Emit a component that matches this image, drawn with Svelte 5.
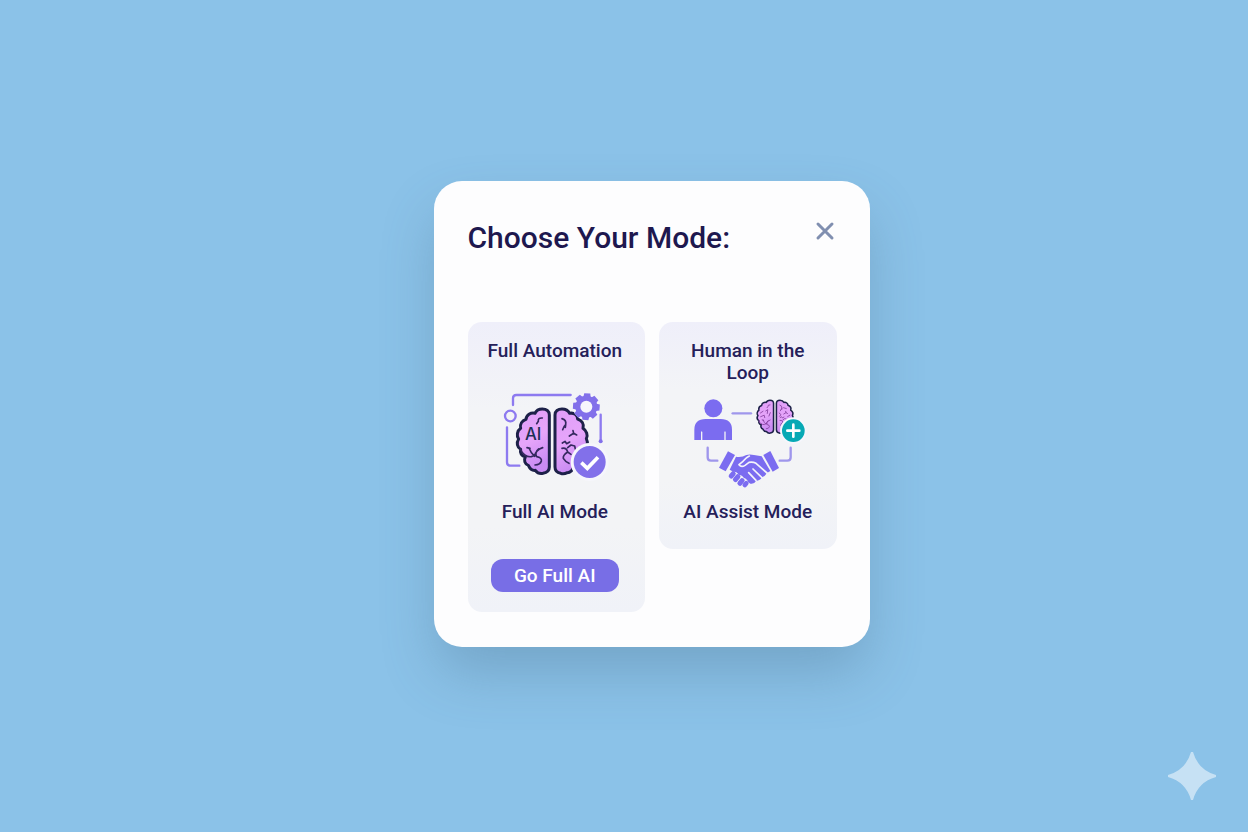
<script module lang="ts">
	export interface ModePickerProps {
		onSelect?: (mode: string) => void;
		onClose?: () => void;
	}
</script>

<script lang="ts">
	let { onSelect, onClose }: ModePickerProps = $props();

	// one tooth, repeated around the gear
	const teeth = [0, 45, 90, 135, 180, 225, 270, 315];
</script>

{#snippet brainHalves()}
	<path
		class="lobe"
		d="M164 90 C164 78 155 72 143 72 C131 72 124 78 121 85 C108 82 95 90 94 103 C82 107 75 117 78 130 C67 138 65 152 72 162 C65 173 67 186 78 193 C75 204 81 214 92 216 C87 225 90 238 101 241 C106 252 114 257 122 256 C128 264 137 267 145 265 C157 263 164 256 164 246 Z"
	/>
	<path
		class="lobe"
		d="M181 90 C181 78 190 72 202 72 C214 72 221 77 225 85 C238 82 249 91 249 102 C261 106 269 117 265 130 C275 137 281 150 275 161 C281 173 278 187 268 193 C270 206 264 215 254 218 C256 230 248 241 238 244 C234 256 227 263 218 263 C210 267 203 267 198 265 C187 263 181 256 181 246 Z"
	/>
{/snippet}

{#snippet brainFolds()}
	<path
		class="fold"
		d="M78 193 C82 207 96 217 110 215 Q118 213 121 208 M143 99 Q129 98 131 109 L126 116 M97 188 L106 190 M103 189 Q109 205 120 214 Q123 194 144 188 M132 192 Q119 203 126 215 Q142 218 140 228 Q137 239 121 240"
	/>
	<path
		class="fold"
		d="M202 101 Q216 105 213 119 Q208 123 204 134 M213 119 L212 127 M235 137 L237 145 L246 150 M237 145 L224 153 M203 174 L211 169 L216 176 L225 171 M219 188 L229 180 L240 183 L242 192 M202 190 Q215 187 219 201 Q204 211 206 220 Q212 230 223 235 M219 201 L229 208"
	/>
{/snippet}

<main class="page">
	<div class="modal" role="dialog" aria-labelledby="mode-title">
		<header class="modal-header">
			<h1 id="mode-title">Choose Your Mode:</h1>
			<button class="close" aria-label="Close" onclick={() => onClose?.()}>
				<svg viewBox="0 0 24 24" aria-hidden="true">
					<path d="M5 5 L19 19 M19 5 L5 19" />
				</svg>
			</button>
		</header>

		<div class="modes">
			<section class="card featured">
				<h2>Full Automation</h2>
				<svg class="art" viewBox="-14 -3 390 351" aria-hidden="true">
					<defs>
						<linearGradient id="pink" x1="0" y1="0" x2="0.3" y2="1">
							<stop offset="0" stop-color="#df9df8" />
							<stop offset="0.55" stop-color="#e6a5fa" />
							<stop offset="1" stop-color="#c98bf3" />
						</linearGradient>
					</defs>
					<g class="wire">
						<path d="M55 60 V40 Q55 30 65 30 H228" />
						<path d="M37 127 V232 Q37 242 47 242 H74" />
						<path d="M318 89 V168" />
						<circle cx="47" cy="93" r="16" />
					</g>
					<circle class="violet" cx="318" cy="169" r="6" />
					<g class="brain">
						{@render brainHalves()}
						{@render brainFolds()}
					</g>
					<text class="ai" x="91" y="166">AI</text>
					<circle class="hole" cx="275" cy="65" r="40" />
					<g class="violet">
						{#each teeth as angle}
							<path d="M263 42 L266 25 H284 L287 42 Z" transform="rotate({angle + 4} 275 65)" />
						{/each}
						<circle cx="275" cy="65" r="33" />
					</g>
					<circle class="hole" cx="275" cy="65" r="18" />
					<circle class="hole" cx="285" cy="231" r="57" />
					<circle class="violet" cx="285" cy="231" r="48" />
					<path class="check" d="M260 233 L278 250 L310 217" />
				</svg>
				<p class="mode-name">Full AI Mode</p>
				<button class="go" onclick={() => onSelect?.('full')}>Go Full AI</button>
			</section>

			<section class="card">
				<h2>Human in the Loop</h2>
				<svg class="art" viewBox="-6 -18 390 351" aria-hidden="true">
					<circle class="person" cx="85" cy="55" r="27" />
					<path
						class="person"
						d="M28 150 V119 Q28 87 62 87 H107 Q141 87 141 119 V150 H122 V126 Q120 121 118 126 V150 H52 V126 Q50 121 48 126 V150 Z"
					/>
					<g class="wire faint">
						<path d="M143 70 H198" />
						<path d="M68 173 V202 Q68 212 78 212 H97" />
						<path d="M317 173 V202 Q317 212 307 212 H284" />
					</g>
					<g class="brain small" transform="translate(182 -6) scale(0.51)">
						{@render brainHalves()}
						{@render brainFolds()}
						<path
							class="fold"
							d="M87 147 L102 137 M118 135 L130 127 L127 150 M145 145 L137 165 M88 169 L109 160 L112 174 M197 147 L208 157 L200 166 M223 116 L239 121 M247 168 L260 160"
						/>
					</g>
					<circle class="hole" cx="325" cy="122" r="40" />
					<circle class="teal" cx="325" cy="122" r="34" />
					<path class="plus" d="M307 122 H343 M325 104 V140" />
					<g class="person">
						<path d="M129 184 L150 195 L122 244 L102 233 Z" />
						<path d="M235 195 L256 183 L282 234 L263 245 Z" />
						<path
							d="M153 200 Q170 203 184 195 Q194 192 207 195 L230 199 L256 243 L246 249 Q240 259 231 262 Q226 272 213 273 Q208 283 196 281 L190 277 Q186 266 177 264 Q171 254 162 255 Q156 244 145 245 L134 239 Z"
						/>
						<rect x="134" y="243" width="15" height="24" rx="7" transform="rotate(40 142 255)" />
						<rect x="148" y="252" width="15" height="26" rx="7" transform="rotate(40 156 264)" />
						<rect x="161" y="263" width="15" height="25" rx="7" transform="rotate(40 168 275)" />
						<rect x="175" y="272" width="14" height="21" rx="7" transform="rotate(40 182 282)" />
					</g>
					<path
						class="grip"
						d="M193 198 Q183 202 174 214 L162 224 Q169 233 180 226 L192 217 Q204 215 213 220 L246 249 M204 237 L230 262 M191 248 L213 271"
					/>
				</svg>
				<p class="mode-name">AI Assist Mode</p>
			</section>
		</div>
	</div>

	<svg class="sparkle" viewBox="0 0 48 48" aria-hidden="true">
		<path d="M23 0 H25 Q30 18 48 23 V25 Q30 30 25 48 H23 Q18 30 0 25 V23 Q18 18 23 0 Z" />
	</svg>
</main>

<style>
	:global(body) {
		margin: 0;
	}

	.page {
		position: relative;
		box-sizing: border-box;
		min-height: 100vh;
		padding: 0 0 4px 55px;

		display: flex;
		align-items: center;
		justify-content: center;

		background: #8bc2e8;
		color: #25205a;
		font-family: Roboto, 'Liberation Sans', sans-serif;
	}

	.modal {
		box-sizing: border-box;
		width: 100%;
		max-width: 436px;
		padding: 38px 33px 35px 34px;

		background: #fdfdfe;
		border-radius: 28px;
		box-shadow: 0 28px 56px -4px rgba(64, 104, 130, 0.32);
	}

	.modal-header {
		display: flex;
		align-items: flex-start;
		justify-content: space-between;
		margin-bottom: 65px;
	}

	h1 {
		margin: 0;
		font-size: 30px;
		font-weight: 500;
		line-height: 38px;
		color: #1e184f;
	}

	.close {
		width: 24px;
		height: 24px;
		padding: 0;
		border: none;
		background: none;
		cursor: pointer;
	}

	.close svg {
		display: block;
		fill: none;
		stroke: #808fb0;
		stroke-width: 3;
		stroke-linecap: round;
	}

	.modes {
		display: grid;
		grid-template-columns: 1fr 1fr;
		align-items: start;
		gap: 14px;
	}

	.card {
		display: flex;
		flex-direction: column;
		align-items: center;
		padding: 18px 16px 26px;

		background: linear-gradient(#efeffa, #f3f4f7 30%, #f3f4f6 70%, #f0f2f8);
		border-radius: 14px;
		text-align: center;
	}

	.featured {
		padding: 18px 19px 20px 16px;
	}

	h2,
	.mode-name {
		margin: 0;
		font-size: 19px;
		font-weight: 500;
		line-height: 22px;
	}

	h2 {
		min-height: 44px;
	}

	.art {
		width: 130px;
		height: 117px;
	}

	.go {
		width: 128px;
		height: 33px;
		margin-top: 36px;
		padding: 0;

		border: none;
		border-radius: 12px;
		background: #786ee6;
		color: #fff;
		font: 500 19px/22px Roboto, 'Liberation Sans', sans-serif;
		cursor: pointer;
	}

	.wire {
		fill: none;
		stroke: #8d7af0;
		stroke-width: 7;
		stroke-linecap: round;
	}

	.faint {
		stroke: #9f96ec;
	}

	.violet {
		fill: #8270ea;
	}

	.person {
		fill: #7b6cf0;
	}

	.hole {
		fill: #f6f6fc;
	}

	.lobe {
		fill: url(#pink);
		stroke: #1d2149;
		stroke-width: 9;
		stroke-linejoin: round;
	}

	.fold {
		fill: none;
		stroke: #35285f;
		stroke-width: 5;
		stroke-linecap: round;
		stroke-linejoin: round;
	}

	.small .fold {
		stroke: #85419f;
	}

	.ai {
		fill: #1d2f55;
		font-family: Inter, sans-serif;
		font-size: 50px;
		font-weight: 500;
	}

	.check,
	.plus {
		fill: none;
		stroke: #fff;
		stroke-width: 11;
	}

	.plus {
		stroke-width: 8;
		stroke-linecap: round;
	}

	.teal {
		fill: #07a9b5;
	}

	.grip {
		fill: none;
		stroke: #f4f4fb;
		stroke-width: 5;
		stroke-linecap: round;
		stroke-linejoin: round;
	}

	.sparkle {
		position: absolute;
		right: 32px;
		bottom: 32px;
		width: 48px;
		height: 48px;
		fill: #c6e1f4;
	}
</style>
